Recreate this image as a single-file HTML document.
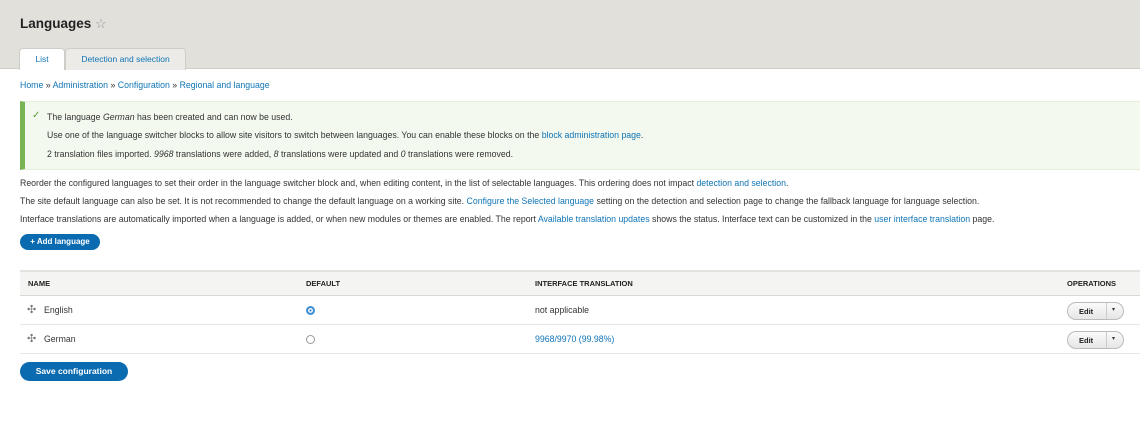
<!DOCTYPE html>
<html><head><style>
*{box-sizing:border-box;margin:0;padding:0}
body{width:1140px;height:431px;background:#fff;font-family:"Liberation Sans",sans-serif;font-size:8.75px;color:#333;position:relative;overflow:hidden}
.hdr{position:absolute;left:0;top:0;width:1140px;height:69px;background:#e2e0db;border-bottom:1px solid #cfcdc7}
.abs{position:absolute;white-space:nowrap}
a{color:#0f74b5;text-decoration:none}
.tab{position:absolute;top:48px;height:22px;border:1px solid #cfcdc7;border-bottom:none;border-radius:4px 4px 0 0;font-size:8.5px;color:#0f74b5;text-align:center;line-height:20px}
.msg{position:absolute;left:20px;top:101px;width:1120px;height:69px;background:#f3f9ef;border-left:5px solid #78b356;border-top:1px solid #e4efdc;border-bottom:1px solid #e4efdc}
.btn{position:absolute;background:#0a6bb0;color:#fff;font-weight:bold;border-radius:10px;text-align:center}
.th{position:absolute;left:20px;top:270px;width:1120px;height:26px;background:#f4f4f2;border-top:2px solid #e2e2df;border-bottom:1px solid #d8d8d4}
.row{position:absolute;left:20px;width:1120px;height:29px;border-bottom:1px solid #e6e6e3}
.b{font-weight:bold;font-size:7.5px;color:#222}
.edit{position:absolute;left:1067px;width:57px;height:18px;border:1px solid #bbb;border-radius:9px;background:linear-gradient(#fafafa,#e6e6e6)}
</style></head><body>
<div class="hdr"></div>
<div class="abs" style="left:20px;top:16px;font-size:13.5px;font-weight:bold;color:#222">Languages <span style="color:#999;font-weight:normal;font-size:13px">☆</span></div>
<div class="tab" style="left:19px;width:46px;background:#fff;height:22px">List</div>
<div class="tab" style="left:65px;width:121px;background:#ecebe8">Detection and selection</div>
<div class="abs" style="left:20px;top:80px"><a>Home</a> » <a>Administration</a> » <a>Configuration</a> » <a>Regional and language</a></div>
<div class="msg"></div>
<div class="abs" style="left:32px;top:110px;color:#5a9e3a;font-size:10px">✓</div>
<div class="abs" style="left:47px;top:112px">The language <i>German</i> has been created and can now be used.</div>
<div class="abs" style="left:47px;top:130px">Use one of the language switcher blocks to allow site visitors to switch between languages. You can enable these blocks on the <a>block administration page</a>.</div>
<div class="abs" style="left:47px;top:149px">2 translation files imported. <i>9968</i> translations were added, <i>8</i> translations were updated and <i>0</i> translations were removed.</div>
<div class="abs" style="left:20px;top:178px">Reorder the configured languages to set their order in the language switcher block and, when editing content, in the list of selectable languages. This ordering does not impact <a>detection and selection</a>.</div>
<div class="abs" style="left:20px;top:196px">The site default language can also be set. It is not recommended to change the default language on a working site. <a>Configure the Selected language</a> setting on the detection and selection page to change the fallback language for language selection.</div>
<div class="abs" style="left:20px;top:214px">Interface translations are automatically imported when a language is added, or when new modules or themes are enabled. The report <a>Available translation updates</a> shows the status. Interface text can be customized in the <a>user interface translation</a> page.</div>
<div class="btn" style="left:20px;top:234px;width:80px;height:16px;line-height:16px;font-size:8px">+ Add language</div>
<div class="th"></div>
<div class="abs b" style="left:28px;top:279px">NAME</div>
<div class="abs b" style="left:306px;top:279px">DEFAULT</div>
<div class="abs b" style="left:535px;top:279px">INTERFACE TRANSLATION</div>
<div class="abs b" style="left:1067px;top:279px">OPERATIONS</div>
<div class="row" style="top:296px"></div>
<div class="row" style="top:325px"></div>
<div class="abs" style="left:27px;top:303px;color:#777;font-size:11px">✣</div>
<div class="abs" style="left:44px;top:305px">English</div>
<div class="abs" style="left:306px;top:306px;width:9px;height:9px;border-radius:50%;border:2px solid #3d8fd6;background:#1f6fc0;box-shadow:inset 0 0 0 1.5px #fff"></div>
<div class="abs" style="left:535px;top:305px">not applicable</div>
<div class="edit" style="top:302px"></div>
<div class="abs b" style="left:1079px;top:307px">Edit</div>
<div class="abs" style="left:1106px;top:303px;height:16px;border-left:1px solid #ccc;width:1px"></div>
<div class="abs" style="left:1112px;top:306px;font-size:6px">▾</div>
<div class="abs" style="left:27px;top:332px;color:#777;font-size:11px">✣</div>
<div class="abs" style="left:44px;top:334px">German</div>
<div class="abs" style="left:306px;top:335px;width:9px;height:9px;border-radius:50%;border:1px solid #999;background:#fff"></div>
<div class="abs" style="left:535px;top:334px"><a>9968/9970 (99.98%)</a></div>
<div class="edit" style="top:331px"></div>
<div class="abs b" style="left:1079px;top:336px">Edit</div>
<div class="abs" style="left:1106px;top:332px;height:16px;border-left:1px solid #ccc;width:1px"></div>
<div class="abs" style="left:1112px;top:335px;font-size:6px">▾</div>
<div class="btn" style="left:20px;top:362px;width:108px;height:19px;line-height:19px;font-size:8.5px">Save configuration</div>
</body></html>
